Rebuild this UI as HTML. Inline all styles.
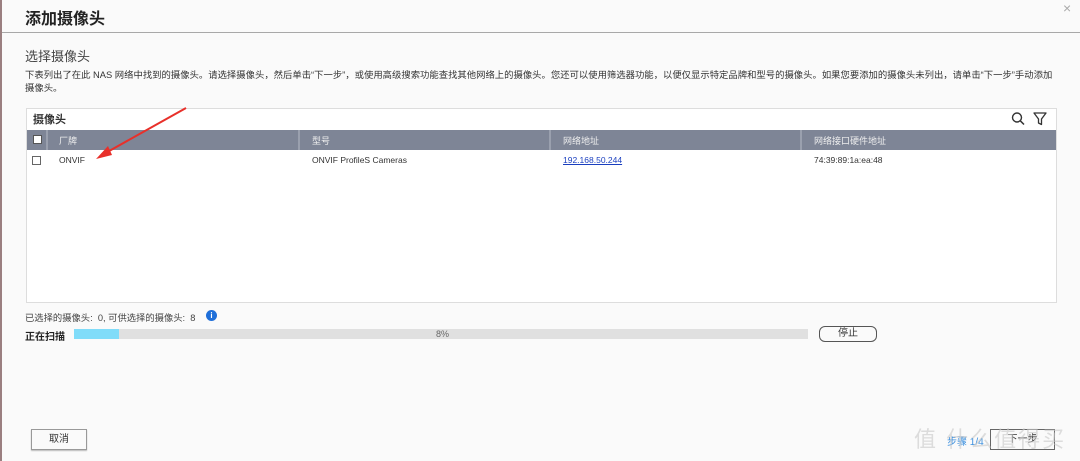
<!DOCTYPE html>
<html><head><meta charset="utf-8"><style>
*{margin:0;padding:0;box-sizing:border-box}
body{width:1080px;height:461px;background:#fafafa;position:relative;overflow:hidden;font-family:"Liberation Sans","Noto Sans CJK SC",sans-serif;color:#333}
.a{position:absolute;white-space:nowrap}
</style></head><body>
<div class="a" style="left:0;top:0;width:2px;height:461px;background:#9a7f80"></div>
<div class="a" style="left:25px;top:5px;font-size:16px;font-weight:bold;color:#222">添加摄像头</div>
<div class="a" style="left:1063px;top:0px;font-size:14px;color:#aaa">×</div>
<div class="a" style="left:2px;top:32px;width:1078px;height:1px;background:#a8a8a8"></div>
<div class="a" style="left:25px;top:46px;font-size:13px;color:#444">选择摄像头</div>
<div class="a" style="left:25px;top:69px;font-size:9.35px;line-height:13px;color:#333">下表列出了在此 NAS 网络中找到的摄像头。请选择摄像头，然后单击“下一步”，或使用高级搜索功能查找其他网络上的摄像头。您还可以使用筛选器功能，以便仅显示特定品牌和型号的摄像头。如果您要添加的摄像头未列出，请单击“下一步”手动添加<br>摄像头。</div>
<div class="a" style="left:26px;top:108px;width:1031px;height:195px;border:1px solid #ddd;background:#fff"></div>
<div class="a" style="left:33px;top:111px;font-size:11px;font-weight:bold;color:#333">摄像头</div>
<svg class="a" style="left:1010px;top:111px" width="40" height="16" viewBox="0 0 40 16"><circle cx="7" cy="6.5" r="4.5" fill="none" stroke="#333" stroke-width="1.4"/><line x1="10.3" y1="9.8" x2="14" y2="13.5" stroke="#333" stroke-width="1.5"/><path d="M24 2H36L31.5 8V13.5L28.5 12V8Z" fill="none" stroke="#333" stroke-width="1.3" stroke-linejoin="round"/></svg>
<div class="a" style="left:27px;top:130px;width:1029px;height:20px;background:#7e8596"></div>
<div class="a" style="left:46px;top:130px;width:2px;height:20px;background:#9aa0ae"></div>
<div class="a" style="left:298px;top:130px;width:2px;height:20px;background:#9aa0ae"></div>
<div class="a" style="left:549px;top:130px;width:2px;height:20px;background:#9aa0ae"></div>
<div class="a" style="left:800px;top:130px;width:2px;height:20px;background:#9aa0ae"></div>
<div class="a" style="left:33px;top:135px;width:9px;height:9px;background:#fff;border:1px solid #555"></div>
<div class="a" style="left:59px;top:134px;font-size:9px;color:#eee">厂牌</div>
<div class="a" style="left:312px;top:134px;font-size:9px;color:#eee">型号</div>
<div class="a" style="left:563px;top:134px;font-size:9px;color:#eee">网络地址</div>
<div class="a" style="left:814px;top:134px;font-size:9px;color:#eee">网络接口硬件地址</div>
<div class="a" style="left:32px;top:156px;width:9px;height:9px;background:#fff;border:1px solid #666"></div>
<div class="a" style="left:59px;top:155px;font-size:8.5px;color:#333">ONVIF</div>
<div class="a" style="left:312px;top:155px;font-size:8.5px;color:#333">ONVIF ProfileS Cameras</div>
<div class="a" style="left:563px;top:155px;font-size:8.5px;color:#1a3fbf;text-decoration:underline">192.168.50.244</div>
<div class="a" style="left:814px;top:155px;font-size:8.5px;color:#333">74:39:89:1a:ea:48</div>
<svg class="a" style="left:90px;top:105px" width="100" height="60"><line x1="96" y1="3" x2="12" y2="50" stroke="#e8302a" stroke-width="2"/><path d="M6 54L18 41L22 50Z" fill="#e8302a"/></svg>
<div class="a" style="left:25px;top:310px;font-size:9.3px;color:#444">已选择的摄像头:&nbsp; 0, 可供选择的摄像头:&nbsp; 8</div>
<div class="a" style="left:206px;top:310px;width:11px;height:11px;border-radius:50%;background:#1f6fd9;color:#fff;font-size:8px;line-height:11px;text-align:center;font-weight:bold">i</div>
<div class="a" style="left:25px;top:328px;font-size:10px;font-weight:bold;color:#222">正在扫描</div>
<div class="a" style="left:74px;top:329px;width:734px;height:10px;background:#e0e0e0"></div>
<div class="a" style="left:74px;top:329px;width:45px;height:10px;background:#80dcf9"></div>
<div class="a" style="left:436px;top:329px;font-size:9px;color:#666">8%</div>
<div class="a" style="left:819px;top:326px;width:58px;height:16px;border:1px solid #555;border-radius:6px;background:#fafafa;font-size:10px;text-align:center;line-height:14px;color:#333">停止</div>
<div class="a" style="left:31px;top:429px;width:56px;height:21px;border:1px solid #999;box-shadow:0 1px 1px #bbb;background:#fafafa;font-size:10px;text-align:center;line-height:19px;color:#333">取消</div>
<div class="a" style="left:947px;top:433px;font-size:10px;color:#3a8fdf">步骤 1/4</div>
<div class="a" style="left:990px;top:429px;width:65px;height:21px;border:1px solid #666;background:#fafafa;font-size:10px;text-align:center;line-height:19px;color:#333">下一步</div>
<div class="a" style="left:914px;top:422px;font-size:22px;letter-spacing:2px;color:rgba(200,200,200,0.6)">值 什么值得买</div>
</body></html>
